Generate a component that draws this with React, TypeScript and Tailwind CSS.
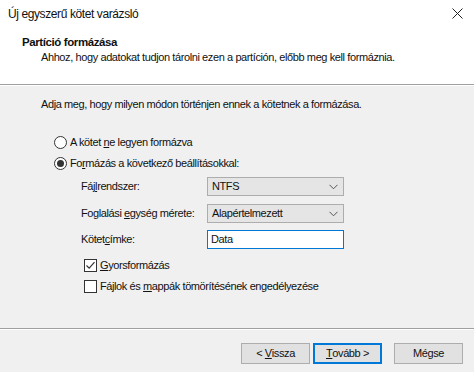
import React from "react";

const font = { fontFamily: '"Liberation Sans", Arial, sans-serif' };

function Radio({ checked }: { checked: boolean }) {
  return (
    <span className="w-[13px] h-[13px] rounded-full border border-[#333] bg-white flex items-center justify-center shrink-0">
      {checked && <span className="w-[7px] h-[7px] rounded-full bg-[#333]" />}
    </span>
  );
}

function Check({ checked }: { checked: boolean }) {
  return (
    <span className="w-[13px] h-[13px] border border-[#333] bg-white flex items-center justify-center shrink-0">
      {checked && (
        <svg width="11" height="11" viewBox="0 0 11 11">
          <path d="M1.5 5.5 L4.2 8.2 L9.5 2.2" fill="none" stroke="#333" strokeWidth="1.2" />
        </svg>
      )}
    </span>
  );
}

function Select({ value }: { value: string }) {
  return (
    <div className="w-[137px] h-[19px] border border-[#adadad] bg-[#e5e5e5] flex items-center justify-between pl-[4px] pr-[5px]">
      <span>{value}</span>
      <svg width="9" height="6" viewBox="0 0 9 6">
        <path d="M0.5 0.8 L4.5 4.8 L8.5 0.8" fill="none" stroke="#555" strokeWidth="1" />
      </svg>
    </div>
  );
}

function Btn({ children, primary }: { children: React.ReactNode; primary?: boolean }) {
  return (
    <div
      className={`w-[69px] h-[21px] flex items-center justify-center bg-[#e1e1e1] whitespace-pre ${
        primary ? "border-2 border-[#0078d7]" : "border border-[#adadad]"
      }`}
    >
      {children}
    </div>
  );
}

export default function App() {
  return (
    <div
      className="w-[474px] h-[372px] bg-[#f0f0f0] text-[11px] tracking-[-0.4px] text-[#111] flex flex-col overflow-hidden whitespace-nowrap"
      style={font}
    >
      <div className="h-[84px] bg-white flex flex-col">
        <div className="h-[27px] flex items-center justify-between pl-[8px] pr-[11px]">
          <span className="text-[12px] tracking-[-0.4px]">Új egyszerű kötet varázsló</span>
          <svg width="11" height="11" viewBox="0 0 11 11">
            <path d="M0.5 0.5 L10.5 10.5 M10.5 0.5 L0.5 10.5" stroke="#222" strokeWidth="1" />
          </svg>
        </div>
        <div className="pl-[22px] pt-[8px] font-bold leading-[15px] text-[11.5px]">Partíció formázása</div>
        <div className="pl-[41px] leading-[15px]">Ahhoz, hogy adatokat tudjon tárolni ezen a partíción, előbb meg kell formáznia.</div>
      </div>
      <div className="h-[2px] border-t border-[#a0a0a0] border-b-white border-b" />
      <div className="flex-1 flex flex-col pl-[41px] pt-[11px]">
        <div className="leading-[14px]">Adja meg, hogy milyen módon történjen ennek a kötetnek a formázása.</div>
        <div className="mt-[24px] pl-[13px] flex items-center gap-[3px] h-[14px]">
          <Radio checked={false} />
          <span>A kötet <u>n</u>e legyen formázva</span>
        </div>
        <div className="mt-[7px] pl-[13px] flex items-center gap-[3px] h-[14px]">
          <Radio checked={true} />
          <span>Fo<u>r</u>mázás a következő beállításokkal:</span>
        </div>
        <div className="mt-[7px] pl-[40px] flex items-center h-[19px]">
          <span className="w-[126px]">Fáj<u>l</u>rendszer:</span>
          <Select value="NTFS" />
        </div>
        <div className="mt-[8px] pl-[40px] flex items-center h-[19px]">
          <span className="w-[126px]">Foglalási <u>e</u>gység mérete:</span>
          <Select value="Alapértelmezett" />
        </div>
        <div className="mt-[7px] pl-[40px] flex items-center h-[19px]">
          <span className="w-[126px]">Kötet<u>c</u>ímke:</span>
          <div className="w-[137px] h-[19px] border border-[#0078d7] bg-white flex items-center pl-[3px]">Data</div>
        </div>
        <div className="mt-[9px] pl-[43px] flex items-center gap-[3px] h-[14px]">
          <Check checked={true} />
          <span><u>G</u>yorsformázás</span>
        </div>
        <div className="mt-[7px] pl-[43px] flex items-center gap-[3px] h-[14px]">
          <Check checked={false} />
          <span>Fájlok és <u>m</u>appák tömörítésének engedélyezése</span>
        </div>
      </div>
      <div className="h-[2px] border-t border-[#a0a0a0] border-b-white border-b" />
      <div className="h-[42px] flex items-start pt-[13px] pl-[241px]">
        <Btn>{"< "}<u>V</u>issza</Btn>
        <div className="w-[3px]" />
        <Btn primary><u>T</u>ovább{" >"}</Btn>
        <div className="w-[12px]" />
        <Btn>Mégse</Btn>
      </div>
    </div>
  );
}
